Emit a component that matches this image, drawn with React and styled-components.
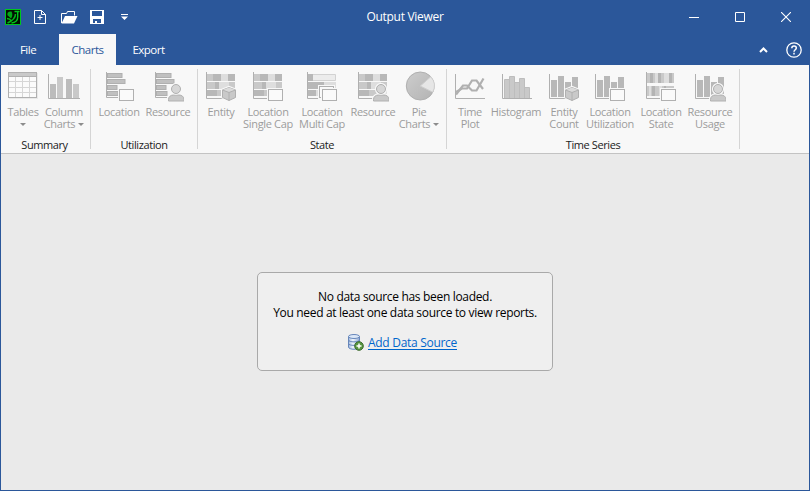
import React from "react";
import styled, { createGlobalStyle } from "styled-components";

const BLUE = "#2b579a";

const GlobalStyle = createGlobalStyle`
  *, *::before, *::after { box-sizing: border-box; }
  body { margin: 0; }
`;

const Window = styled.div`
  width: 810px;
  height: 491px;
  display: flex;
  flex-direction: column;
  border: 1px solid ${BLUE};
  border-top: 0;
  background: #eaeaea;
  font-family: "Open Sans", "Noto Sans", sans-serif;
  font-size: 11px;
  color: #222;
  overflow: hidden;
`;

const TitleBar = styled.header`
  flex: none;
  height: 34px;
  display: grid;
  grid-template-columns: 1fr auto 1fr;
  align-items: center;
  background: ${BLUE};
  color: #fff;
`;

const QuickAccess = styled.div`
  display: flex;
  align-items: center;
  padding-left: 4px;
  height: 32px;
`;

const Title = styled.h1`
  margin: 0;
  font-size: 12px;
  font-weight: 400;
  line-height: 34px;
  letter-spacing: -0.3px;
`;

const WindowControls = styled.div`
  display: flex;
  justify-content: flex-end;
  height: 32px;
  align-items: center;
`;

const IconButton = styled.button`
  display: flex;
  align-items: center;
  justify-content: center;
  width: ${(p) => p.$w}px;
  height: 32px;
  padding: 0;
  border: 0;
  background: none;
  color: #fff;
  svg { display: block; }
`;

const TabBar = styled.nav`
  flex: none;
  display: flex;
  height: 31px;
  background: ${BLUE};
`;

const Tab = styled.button`
  width: ${(p) => p.$w}px;
  height: 31px;
  padding: 0 ${(p) => p.$padRight || 0}px 0 0;
  border: 0;
  font: inherit;
  font-size: 11.5px;
  line-height: 31px;
  letter-spacing: -0.5px;
  color: ${(p) => (p.$active ? BLUE : "#fff")};
  background: ${(p) => (p.$active ? "#f8f8f8" : "transparent")};
`;

const TabTools = styled.div`
  display: flex;
  margin-left: auto;
`;

const Ribbon = styled.div`
  flex: none;
  display: flex;
  height: 89px;
  background: #f8f8f8;
  border-bottom: 1px solid #c3c3c3;
`;

const Group = styled.section`
  display: flex;
  flex-direction: column;
  width: ${(p) => p.$w}px;
  height: 80px;
  margin-top: 4px;
  border-right: 1px solid #d5d5d5;
`;

const GroupButtons = styled.div`
  flex: none;
  display: flex;
  height: 68px;
  padding-left: ${(p) => p.$pad}px;
`;

const GroupLabel = styled.div`
  font-size: 11px;
  line-height: 16px;
  text-align: center;
  padding-right: ${(p) => p.$shift || 0}px;
  letter-spacing: -0.4px;
`;

const RibbonButton = styled.button`
  flex: none;
  display: flex;
  flex-direction: column;
  align-items: center;
  width: ${(p) => p.$w}px;
  padding: 1px 0 0;
  border: 0;
  background: none;
  font: inherit;
  font-size: 11px;
  color: #9c9c9c;
  svg { display: block; flex: none; }
`;

const Label = styled.span`
  display: flex;
  align-items: center;
  justify-content: center;
  height: 12px;
  line-height: 12px;
  white-space: nowrap;
  letter-spacing: -0.33px;
`;

const Labels = styled.span`
  display: block;
  padding-top: 4px;
`;

const Caret = styled.i`
  width: 0;
  height: 0;
  margin-left: ${(p) => (p.$inline ? 3 : 0)}px;
  border: 3px solid transparent;
  border-top-color: #8c8c8c;
  border-bottom-width: 0;
`;

const Content = styled.main`
  flex: 1;
  display: flex;
  justify-content: center;
  align-items: center;
  padding-bottom: 2px;
`;

const Card = styled.div`
  display: flex;
  flex-direction: column;
  align-items: center;
  width: 296px;
  height: 99px;
  padding-top: 16px;
  border: 1px solid #a9a9a9;
  border-radius: 5px;
  background: #efefef;
  color: #000;
`;

const Message = styled.p`
  margin: 0;
  font-size: 12px;
  line-height: 16px;
  white-space: nowrap;
  letter-spacing: -0.32px;
`;

const LinkRow = styled.div`
  display: flex;
  align-items: center;
  gap: 4px;
  margin-top: 13px;
  padding-right: 5px;
  height: 18px;
`;

const Link = styled.a`
  color: #0066cc;
  font-size: 12px;
  line-height: 18px;
  letter-spacing: -0.29px;
  text-decoration: underline;
  text-underline-offset: 1.5px;
  text-decoration-skip-ink: none;
`;

const D = "#b8b8b8";
const M = "#c9c9c9";
const L = "#dedede";
const LINE = "#b0b0b0";
const BG = "#f8f8f8";

const Art = ({ children }) => (
  <svg width="32" height="32" viewBox="0 0 32 32" fill="none">{children}</svg>
);

const Box = ({ x = 16, y = 19 }) => (
  <>
    <rect x={x - 1} y={y - 1} width="17" height="14" fill={BG} />
    <rect x={x + 0.5} y={y + 0.5} width="14" height="11" fill="#fafafa" stroke={LINE} />
  </>
);

const Person = () => (
  <>
    <path d="M15 32v-2.500c0-3.500 2.500-5.500 5-6a6 6 0 1 1 8 0c2.500.5 5 2.500 5 6V32z" fill={BG} />
    <path d="M16.500 31v-1.500c0-3 2.500-4.500 5-4.500h5.500c2.500 0 5 1.500 5 4.500V31z" fill={M} stroke={LINE} />
    <circle cx="24" cy="19" r="5.700" fill={BG} />
    <circle cx="24" cy="19" r="4.500" fill="#d6d6d6" stroke={LINE} />
  </>
);

const Cube = () => (
  <>
    <path d="M24 15.800 32 19v9l-8 3.700L16 28v-9z" fill={BG} />
    <path d="M24 17.500 30.500 20v7.500L24 30.500 17.500 27.500V20z" fill={M} stroke={LINE} strokeLinejoin="round" />
    <path d="M17.500 20 24 22.500 30.500 20 24 17.500z" fill="#dadada" />
    <path d="M17.500 20 24 22.500 30.500 20M24 22.500v8" stroke={LINE} />
  </>
);

const HBars = () => (
  <>
    <path d="M3.500 2v25.500H15" stroke={LINE} />
    {[[3, 15], [9, 18], [15, 10], [21, 11]].map(([y, w]) => (
      <rect key={y} x="4.500" y={y + 0.5} width={w - 0.5} height="4" fill="#c0c0c0" stroke={LINE} />
    ))}
  </>
);

const Rows = () => (
  <>
    <path d="M2 4h28v7H2zM2 12h28v7H2zM2 20h28v7H2z" fill={L} />
    <path d="M8 4h8v7H8zM23 4h7v7h-7zM10 12h4v7h-4zM2 20h10v7H2z" fill={D} />
    <path d="M2 4h6v7H2zM2 12h8v7H2zM24 12h6v7h-6zM12 20h9v7h-9z" fill={M} />
    <path d="M2 3.500h28M2 11.500h28M2 19.500h28M2 26.500h28" stroke={BG} />
    <path d="M1.500 2v26.500H30" stroke={LINE} />
  </>
);

const MultiRows = () => (
  <>
    <path d="M2.500 4.500h27v6h-27z" fill="#ececec" stroke="#d2d2d2" />
    <path d="M2 4h5v7H2zM2 12h16v7H2zM2 20h8v6H2z" fill={D} />
    <path d="M18 12h12v7H18zM10 20h8v6h-8z" fill={L} />
    <path d="M2 11.500h28M2 19.500h28" stroke={BG} />
    <path d="M1.500 2v26.500H16" stroke={LINE} />
  </>
);

const Columns = () => (
  <>
    <path d="M1.500 4v24.500H30" stroke={LINE} />
    <path d="M3 10h6v17H3zM10 6h6v21h-6zM17 12h6v15h-6zM24 7h6v20h-6z" fill={D} />
  </>
);

const icons = {
  tables: (
    <>
      <rect x="2" y="3" width="29" height="26" fill="#e9e9e9" />
      <rect x="1.500" y="2.500" width="28" height="25" fill="#fbfbfb" stroke={LINE} />
      <rect x="2" y="3" width="27" height="3.500" fill={M} />
      <path d="M2 11.500h27M2 17.500h27M2 22.500h27M8.500 7v20M15.500 7v20M22.500 7v20" stroke="#d6d6d6" />
      <path d="M1 6.500h29" stroke={LINE} />
    </>
  ),
  column: (
    <>
      <path d="M.5 4v24.500H32" stroke={LINE} />
      <path d="M2 14h6v14H2zM18 9h6v19h-6z" fill="#bcbcbc" />
      <path d="M9 7h6v21H9zM25 14h6v14h-6z" fill={M} />
    </>
  ),
  utilLocation: <><HBars /><Box /></>,
  utilResource: <><HBars /><Person /></>,
  entity: <><Rows /><Cube /></>,
  single: <><Rows /><Box /></>,
  multi: <><MultiRows /><Box x={13} y={16} /><Box /></>,
  stateResource: <><Rows /><Person /></>,
  pie: (
    <>
      <defs>
        <linearGradient id="pieShade" x1="0" y1="0" x2="1" y2="1">
          <stop offset="0" stopColor="#cdcdcd" />
          <stop offset="1" stopColor="#b3b3b3" />
        </linearGradient>
      </defs>
      <circle cx="17.300" cy="16" r="14" fill="url(#pieShade)" stroke="#b0b0b0" />
      <path d="M17.300 16 27.800 6.700A14 14 0 0 1 29.800 22.200z" fill="#e6e6e6" stroke="#cfcfcf" />
    </>
  ),
  plot: (
    <>
      <path d="M1.500 4v24.500H31" stroke={LINE} />
      <path d="M2 24.500 9 15.500h4l5 5h4.500L29.500 8.500" stroke={LINE} strokeWidth="2.200" />
      <path d="M2 22 8 18.500h5L18 10.500h4.500l6.500 8.500" stroke={LINE} strokeWidth="2.200" />
    </>
  ),
  histogram: (
    <>
      <path d="M2.500 4v24.500H32" stroke={LINE} />
      <path d="M4.500 28V9.500h5V28M9.500 28V6.500h5V28M14.500 28V12.500h5V28M19.500 28V8.500h5V28M24.500 28V17.500h5V28" fill={M} stroke="#bdbdbd" />
    </>
  ),
  count: <><Columns /><Cube /></>,
  tsUtil: <><Columns /><Box /></>,
  tsState: (
    <>
      <path d="M2 3h27v10H2zM2 16h27v10H2z" fill={M} />
      <path d="M5 3h3v10H5zM13 3h3v10h-3zM24 3h3v10h-3zM7 16h3v10H7zM19 16h2v10h-2z" fill="#b4b4b4" />
      <path d="M10 3h3v10h-3zM19 3h5v10h-5zM4 16h2v10H4zM14 16h3v10h-3z" fill={L} />
      <path d="M1.500 2v26.500H16" stroke={LINE} />
      <Box />
    </>
  ),
  usage: <><Columns /><Person /></>,
};

const groups = [
  {
    name: "Summary", w: 90, pad: 2, shift: 2,
    items: [
      { icon: "tables", w: 40, lines: ["Tables"], caret: "below" },
      { icon: "column", w: 42, lines: ["Column", "Charts"], caret: "inline" },
    ],
  },
  {
    name: "Utilization", w: 107, pad: 5,
    items: [
      { icon: "utilLocation", w: 46, lines: ["Location"] },
      { icon: "utilResource", w: 52, lines: ["Resource"] },
    ],
  },
  {
    name: "State", w: 249, pad: 4,
    items: [
      { icon: "entity", w: 38, lines: ["Entity"] },
      { icon: "single", w: 56, lines: ["Location", "Single Cap"] },
      { icon: "multi", w: 52, lines: ["Location", "Multi Cap"] },
      { icon: "stateResource", w: 50, lines: ["Resource"] },
      { icon: "pie", w: 42, lines: ["Pie", "Charts"], caret: "inline" },
    ],
  },
  {
    name: "Time Series", w: 293, pad: 5,
    items: [
      { icon: "plot", w: 36, lines: ["Time", "Plot"] },
      { icon: "histogram", w: 56, lines: ["Histogram"] },
      { icon: "count", w: 40, lines: ["Entity", "Count"] },
      { icon: "tsUtil", w: 52, lines: ["Location", "Utilization"] },
      { icon: "tsState", w: 50, lines: ["Location", "State"] },
      { icon: "usage", w: 48, lines: ["Resource", "Usage"] },
    ],
  },
];

const AppLogo = () => (
  <svg width="16" height="16" viewBox="0 0 16 16" fill="none">
    <rect x=".5" y=".5" width="15" height="15" fill="#021002" stroke="#00c71c" />
    <path d="M6.500 2.500C3.500 2 1.800 3.800 2.500 6.200L6 9.500c1.500-2 1.800-4.500.5-7z" fill="#00a818" />
    <path d="M9.500 2.500h5M12.700 2.500v5.500c0 3-2.200 5.500-6.200 6" stroke="#00c71c" strokeWidth="1.400" />
    <path d="M10.500 5C10.500 9 7 12 2.500 14M2 9.500c2 0 3.500 1 4.500 2.500" stroke="#00b81a" strokeWidth="1.500" />
  </svg>
);

const NewIcon = () => (
  <svg width="12" height="14" viewBox="0 0 12 14" fill="none" stroke="#fff">
    <path d="M.5.5h7l4 4v9H.5zM7.500.5v4h4M6 5v5M3.500 7.500h5" />
  </svg>
);

const OpenIcon = () => (
  <svg width="17" height="13" viewBox="0 0 17 13" fill="none">
    <path d="M.5 12V2.500h5l1-2h7v4" stroke="#fff" />
    <path d="M4 5h12.500L13 12.500H.5z" fill="#fff" />
  </svg>
);

const SaveIcon = () => (
  <svg width="14" height="14" viewBox="0 0 14 14">
    <path fillRule="evenodd" fill="#fff" d="M0 0h14v14H0zM2 1v5h10V1zM3 9v4h2v-2h2v2h4V9z" />
  </svg>
);

const DatabaseAddIcon = () => (
  <svg width="16" height="17" viewBox="0 0 16 17" fill="none">
    <defs>
      <linearGradient id="db" x1="0" x2="1">
        <stop offset="0" stopColor="#9fb7dc" />
        <stop offset=".4" stopColor="#f1f6fd" />
        <stop offset="1" stopColor="#8da8d3" />
      </linearGradient>
    </defs>
    <path d="M.5 2.500v10.500c0 3 11 3 11 0V2.500" fill="url(#db)" stroke="#6787bb" />
    <ellipse cx="6" cy="2.500" rx="5.500" ry="2" fill="#dbe7f7" stroke="#6787bb" />
    <path d="M.5 6c0 2.500 11 2.500 11 0M.5 9.500c0 2.500 11 2.500 11 0" stroke="#6787bb" />
    <circle cx="11" cy="12" r="4.300" fill="#57963f" stroke="#3d6a2e" />
    <path d="M11 9.500v5M8.500 12h5" stroke="#fff" strokeWidth="1.500" />
  </svg>
);

export default function App() {
  return (
    <Window>
      <GlobalStyle />
      <TitleBar>
        <QuickAccess>
          <IconButton $w={16} aria-label="Output Viewer"><AppLogo /></IconButton>
          <IconButton $w={38} aria-label="New"><NewIcon /></IconButton>
          <IconButton $w={20} aria-label="Open"><OpenIcon /></IconButton>
          <IconButton $w={36} aria-label="Save"><SaveIcon /></IconButton>
          <IconButton $w={18} aria-label="Customize">
            <svg width="7" height="6" viewBox="0 0 7 6"><path d="M0 0h7v1H0zM0 2.500h7L3.500 6z" fill="#fff" /></svg>
          </IconButton>
        </QuickAccess>
        <Title>Output Viewer</Title>
        <WindowControls>
          <IconButton $w={46} aria-label="Minimize">
            <svg width="10" height="1"><path d="M0 .5h10" stroke="#fff" /></svg>
          </IconButton>
          <IconButton $w={46} aria-label="Maximize">
            <svg width="10" height="10"><path d="M.5.5h9v9h-9z" fill="none" stroke="#fff" /></svg>
          </IconButton>
          <IconButton $w={46} aria-label="Close">
            <svg width="10" height="10"><path d="m0 0 10 10m0-10L0 10" stroke="#fff" strokeWidth="1.100" /></svg>
          </IconButton>
        </WindowControls>
      </TitleBar>

      <TabBar>
        <Tab $w={58} $padRight={4}>File</Tab>
        <Tab $w={57} $active>Charts</Tab>
        <Tab $w={66} $padRight={1}>Export</Tab>
        <TabTools>
          <IconButton $w={30} aria-label="Collapse ribbon">
            <svg width="9" height="6" fill="none"><path d="m1 5 3.500-3.500L8 5" stroke="#fff" strokeWidth="2" /></svg>
          </IconButton>
          <IconButton $w={31} aria-label="Help">
            <svg width="16" height="16" viewBox="0 0 16 16" fill="none" stroke="#fff">
              <circle cx="8" cy="8" r="7.200" strokeWidth="1.300" />
              <path d="M5.800 6.300c0-3 4.500-2.800 4.500-.2C10.300 7.800 8 7.800 8 9.800M8 10.800v1.700" strokeWidth="1.500" />
            </svg>
          </IconButton>
        </TabTools>
      </TabBar>

      <Ribbon>
        {groups.map((g) => (
          <Group key={g.name} $w={g.w}>
            <GroupButtons $pad={g.pad}>
              {g.items.map((it) => (
                <RibbonButton key={it.icon} $w={it.w}>
                  <Art>{icons[it.icon]}</Art>
                  <Labels>
                    {it.lines.map((line, i) => (
                      <Label key={line}>
                        {line}
                        {it.caret === "inline" && i === 1 && <Caret $inline />}
                      </Label>
                    ))}
                    {it.caret === "below" && <Label><Caret /></Label>}
                  </Labels>
                </RibbonButton>
              ))}
            </GroupButtons>
            <GroupLabel $shift={g.shift}>{g.name}</GroupLabel>
          </Group>
        ))}
      </Ribbon>

      <Content>
        <Card>
          <Message>No data source has been loaded.</Message>
          <Message>You need at least one data source to view reports.</Message>
          <LinkRow>
            <DatabaseAddIcon />
            <Link>Add Data Source</Link>
          </LinkRow>
        </Card>
      </Content>
    </Window>
  );
}
